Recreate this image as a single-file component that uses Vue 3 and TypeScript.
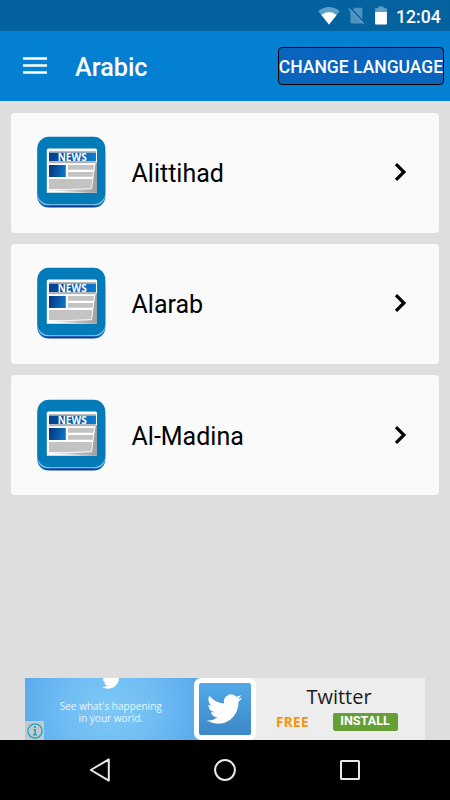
<script setup lang="ts">
const papers: string[] = ['Alittihad', 'Alarab', 'Al-Madina']

const birdPath =
  'M23.953 4.57a10 10 0 01-2.825.775 4.958 4.958 0 002.163-2.723c-.951.555-2.005.959-3.127 1.184a4.92 4.92 0 00-8.384 4.482C7.69 8.095 4.067 6.13 1.64 3.162a4.822 4.822 0 00-.666 2.475c0 1.71.87 3.213 2.188 4.096a4.904 4.904 0 01-2.228-.616v.06a4.923 4.923 0 003.946 4.827 4.996 4.996 0 01-2.212.085 4.936 4.936 0 004.604 3.417 9.867 9.867 0 01-6.102 2.105c-.39 0-.779-.023-1.17-.067a13.995 13.995 0 007.557 2.209c9.053 0 13.998-7.496 13.998-13.985 0-.21 0-.42-.015-.63A9.935 9.935 0 0024 4.59z'
</script>

<template>
  <div class="screen">
    <svg class="defs" width="0" height="0" aria-hidden="true">
      <defs>
        <linearGradient id="band" x1="0" x2="1" y1="0" y2="0">
          <stop offset="0" stop-color="#07408f" />
          <stop offset="0.45" stop-color="#0a55a5" />
          <stop offset="1" stop-color="#0a80d0" />
        </linearGradient>
        <linearGradient id="photo" x1="0" x2="1" y1="0" y2="0.2">
          <stop offset="0" stop-color="#06317c" />
          <stop offset="1" stop-color="#0b73c2" />
        </linearGradient>
        <linearGradient id="base" x1="0" x2="1" y1="0" y2="0">
          <stop offset="0" stop-color="#1687cf" />
          <stop offset="0.2" stop-color="#04419b" />
          <stop offset="0.8" stop-color="#04419b" />
          <stop offset="1" stop-color="#1687cf" />
        </linearGradient>
        <linearGradient id="fold" x1="0" x2="1" y1="0" y2="0">
          <stop offset="0" stop-color="#e8e8e8" />
          <stop offset="1" stop-color="#a0a0a0" />
        </linearGradient>
      </defs>
    </svg>

    <header class="status">
      <svg class="wifi" width="22" height="18" viewBox="0 0 22 18">
        <path d="M0.3 4.2Q11 -4 21.7 4.2L11 17.5Z" fill="#5f9fc8" />
        <path d="M3.4 8Q11 2 18.6 8L11 17.5Z" fill="#fff" />
      </svg>
      <svg class="sim" width="17" height="18" viewBox="0 0 17 18">
        <path d="M6.6 0.8H13Q14.4 0.8 14.4 2.2V15.2Q14.4 16.6 13 16.6H3.8Q2.4 16.6 2.4 15.2V5Z" fill="#4f92bf" />
        <path d="M1.6 0.4L16.6 15.6" stroke="#04629f" stroke-width="1.5" />
        <path d="M0.8 1.8L15.6 16.8" stroke="#5f9fc8" stroke-width="1.4" />
      </svg>
      <svg class="battery" width="12" height="19" viewBox="0 0 12 19">
        <path d="M0.1 2.2H3.5V0.4H8.5V2.2H11.9V6H0.1Z" fill="#5f9fc8" />
        <path d="M0.1 6H11.9V17.8Q11.9 18.6 11 18.6H1Q0.1 18.6 0.1 17.8Z" fill="#fff" />
      </svg>
      <span class="time">12:04</span>
    </header>

    <nav class="toolbar">
      <svg class="menu" width="24" height="18" viewBox="0 0 24 18">
        <path d="M0 1.6H24M0 8.6H24M0 15.6H24" stroke="#fff" stroke-width="2.5" />
      </svg>
      <h1 class="title">Arabic</h1>
      <button class="language">CHANGE LANGUAGE</button>
    </nav>

    <main class="list">
      <article v-for="paper in papers" :key="paper" class="card">
        <svg class="paper-icon" width="70" height="72" viewBox="0 0 70 72">
          <rect x="0.3" y="8" width="68" height="63.5" rx="11" fill="url(#base)" />
          <rect x="0.3" y="4" width="68" height="65.2" rx="11" fill="#9fcbea" />
          <rect x="0.3" y="0.8" width="68" height="67.4" rx="11.5" fill="#037bb8" />
          <path d="M11.5 12.6H58.4Q60 12.6 60 14.2V56.8H9.8V14.2Q9.8 12.6 11.5 12.6Z" fill="#fff" />
          <rect x="12" y="15.2" width="47" height="1.5" fill="#a9a9a9" />
          <rect x="12" y="16.7" width="47" height="8.6" fill="url(#band)" />
          <rect x="12" y="25.3" width="46.5" height="1.9" fill="#b2b2b2" />
          <rect x="12" y="29" width="16.8" height="12" fill="url(#photo)" />
          <path d="M31 29H57.5L57.2 33.7H31ZM31 36.1H56.8L56.5 40.8H31ZM12 43.1H55.8L54.5 53.8L12 53Z" fill="#c3c3c3" />
          <path d="M58.8 26L60 26.5V56.7H52L12 54.2L54.4 53.2Z" fill="url(#fold)" />
          <path d="M57.6 27L54.6 52.6L12 54.2" fill="none" stroke="#f4f4f4" stroke-width="1" />
          <text x="35.2" y="24.6" text-anchor="middle" class="news">NEWS</text>
        </svg>
        <span class="name">{{ paper }}</span>
        <svg class="chevron" width="14" height="20" viewBox="0 0 14 20">
          <path d="M3 2.2L10.9 10L3 17.8" fill="none" stroke="#000" stroke-width="3.2" />
        </svg>
      </article>
    </main>

    <aside class="ad">
      <div class="promo">
        <svg class="cut-bird" width="19" height="13" viewBox="0 8.2 24 16.42">
          <path :d="birdPath" fill="#fff" />
        </svg>
        <p class="slogan">See what's happening<br />in your world.</p>
        <span class="info">
          <svg width="16" height="16" viewBox="0 0 16 16">
            <circle cx="8" cy="8" r="7.1" fill="none" stroke="#16a9c0" stroke-width="1.3" />
            <path d="M6.4 6.7H8.2V11.7M6.2 11.7H10" fill="none" stroke="#16a9c0" stroke-width="1.5" />
            <circle cx="8" cy="4" r="1.1" fill="#16a9c0" />
          </svg>
        </span>
      </div>
      <div class="app-frame">
        <div class="app-tile">
          <svg width="35" height="30" viewBox="0 2 24 20" preserveAspectRatio="none">
            <path :d="birdPath" fill="#fff" />
          </svg>
        </div>
      </div>
      <div class="offer">
        <span class="app-name">Twitter</span>
        <div class="actions">
          <span class="price">FREE</span>
          <span class="install">INSTALL</span>
        </div>
      </div>
    </aside>

    <footer class="navbar">
      <svg width="24" height="26" viewBox="0 0 24 26">
        <path d="M2.8 13L20.8 2.4V23.6Z" fill="none" stroke="#e9e9e9" stroke-width="2" stroke-linejoin="round" />
      </svg>
      <svg width="24" height="26" viewBox="0 0 24 26">
        <circle cx="12" cy="13" r="9.9" fill="none" stroke="#e9e9e9" stroke-width="2" />
      </svg>
      <svg width="24" height="26" viewBox="0 0 24 26">
        <rect x="3" y="4" width="18" height="18" rx="0.5" fill="none" stroke="#e9e9e9" stroke-width="2" />
      </svg>
    </footer>
  </div>
</template>

<style>
body {
  margin: 0;
}
</style>

<style scoped>
.screen {
  width: 450px;
  height: 800px;
  display: flex;
  flex-direction: column;
  overflow: hidden;
  background: #dedede;
  font-family: Roboto, "Liberation Sans", sans-serif;
}
.defs {
  position: absolute;
}
.status {
  height: 31px;
  flex: none;
  box-sizing: border-box;
  display: flex;
  align-items: flex-start;
  justify-content: flex-end;
  padding: 6px 10px 0 0;
  background: #04629f;
  color: #fff;
}
.wifi {
  margin-top: 1px;
}
.sim {
  margin: 1px 0 0 8px;
}
.battery {
  margin-left: 10px;
}
.time {
  width: 44px;
  margin-left: 9px;
  font-size: 17.6px;
  font-weight: 500;
  line-height: 22px;
}
.toolbar {
  height: 70px;
  flex: none;
  box-sizing: border-box;
  display: flex;
  align-items: center;
  padding: 0 6px 0 23px;
  background: #0380d1;
  color: #fff;
}
.title {
  margin: 4px 0 0 28px;
  font-size: 25.2px;
  font-weight: 500;
  line-height: 30px;
}
.language {
  width: 166px;
  height: 38px;
  box-sizing: border-box;
  margin: 0 0 0 auto;
  padding: 2px 0 0;
  display: flex;
  align-items: center;
  justify-content: center;
  border: 1.5px solid #000;
  border-radius: 4px;
  background: #0864bd;
  color: #fff;
  font: 500 17.5px Roboto, sans-serif;
  white-space: nowrap;
}
.list {
  flex: 1;
  display: flex;
  flex-direction: column;
  gap: 11.25px;
  padding: 11.6px 11px 0;
}
.card {
  height: 120px;
  flex: none;
  box-sizing: border-box;
  display: flex;
  align-items: center;
  padding: 0 32px 0 26px;
  border-radius: 4px;
  background: #fafafa;
}
.news {
  font: 700 10px "Open Sans", sans-serif;
  fill: #fff;
}
.paper-icon {
  margin-bottom: 1px;
}
.name {
  margin: 3px 0 0 24.5px;
  color: #000;
  font-size: 25px;
  line-height: 30px;
}
.chevron {
  margin: 0 0 1px auto;
}
.ad {
  width: 400px;
  height: 62.5px;
  flex: none;
  display: flex;
  align-self: center;
  background: linear-gradient(90deg, #5aabed 0 200px, #ededed 200px);
  overflow: hidden;
}
.promo {
  width: 168.5px;
  position: relative;
  display: flex;
  flex-direction: column;
  align-items: center;
  background: radial-gradient(circle at 50% 50%, #7cc8f6 0%, #70bdf3 50%, #5aabed 100%);
}
.cut-bird {
  margin-left: 4px;
}
.slogan {
  margin: 9px 0 0 3px;
  color: #e9f6ff;
  font: 400 10px/12.5px "Open Sans", sans-serif;
  letter-spacing: 0.02px;
  text-align: center;
  white-space: nowrap;
}
.info {
  position: absolute;
  left: 0;
  bottom: 0;
  width: 19px;
  height: 19px;
  display: flex;
  align-items: center;
  justify-content: center;
  background: #c3c9cc;
}
.app-frame {
  width: 62.5px;
  box-sizing: border-box;
  padding: 5.5px;
  border-radius: 7px;
  background: #fff;
}
.app-tile {
  width: 51.5px;
  height: 51.5px;
  display: flex;
  align-items: center;
  justify-content: center;
  border-radius: 2px;
  background: linear-gradient(#53a9e8, #3b88c6);
}
.offer {
  flex: 1;
  display: flex;
  flex-direction: column;
  align-items: center;
}
.app-name {
  margin: 5px 0 0 -3px;
  color: #1c1c1c;
  font: 400 20px/27px "Open Sans", sans-serif;
}
.actions {
  display: flex;
  align-items: center;
  align-self: stretch;
  padding-left: 20px;
  margin-top: 2.6px;
}
.price {
  width: 56.5px;
  color: #f7930b;
  font: 700 13.5px/20px "Noto Sans", sans-serif;
  letter-spacing: 0.4px;
}
.install {
  width: 65px;
  height: 18.5px;
  border-radius: 2px;
  background: #659f36;
  color: #fff;
  font: 700 12.6px/16px Roboto, sans-serif;
  text-align: center;
}
.navbar {
  height: 60px;
  flex: none;
  display: flex;
  align-items: center;
  justify-content: space-between;
  box-sizing: border-box;
  padding: 0 88px 0 88px;
  background: #000;
}
</style>
